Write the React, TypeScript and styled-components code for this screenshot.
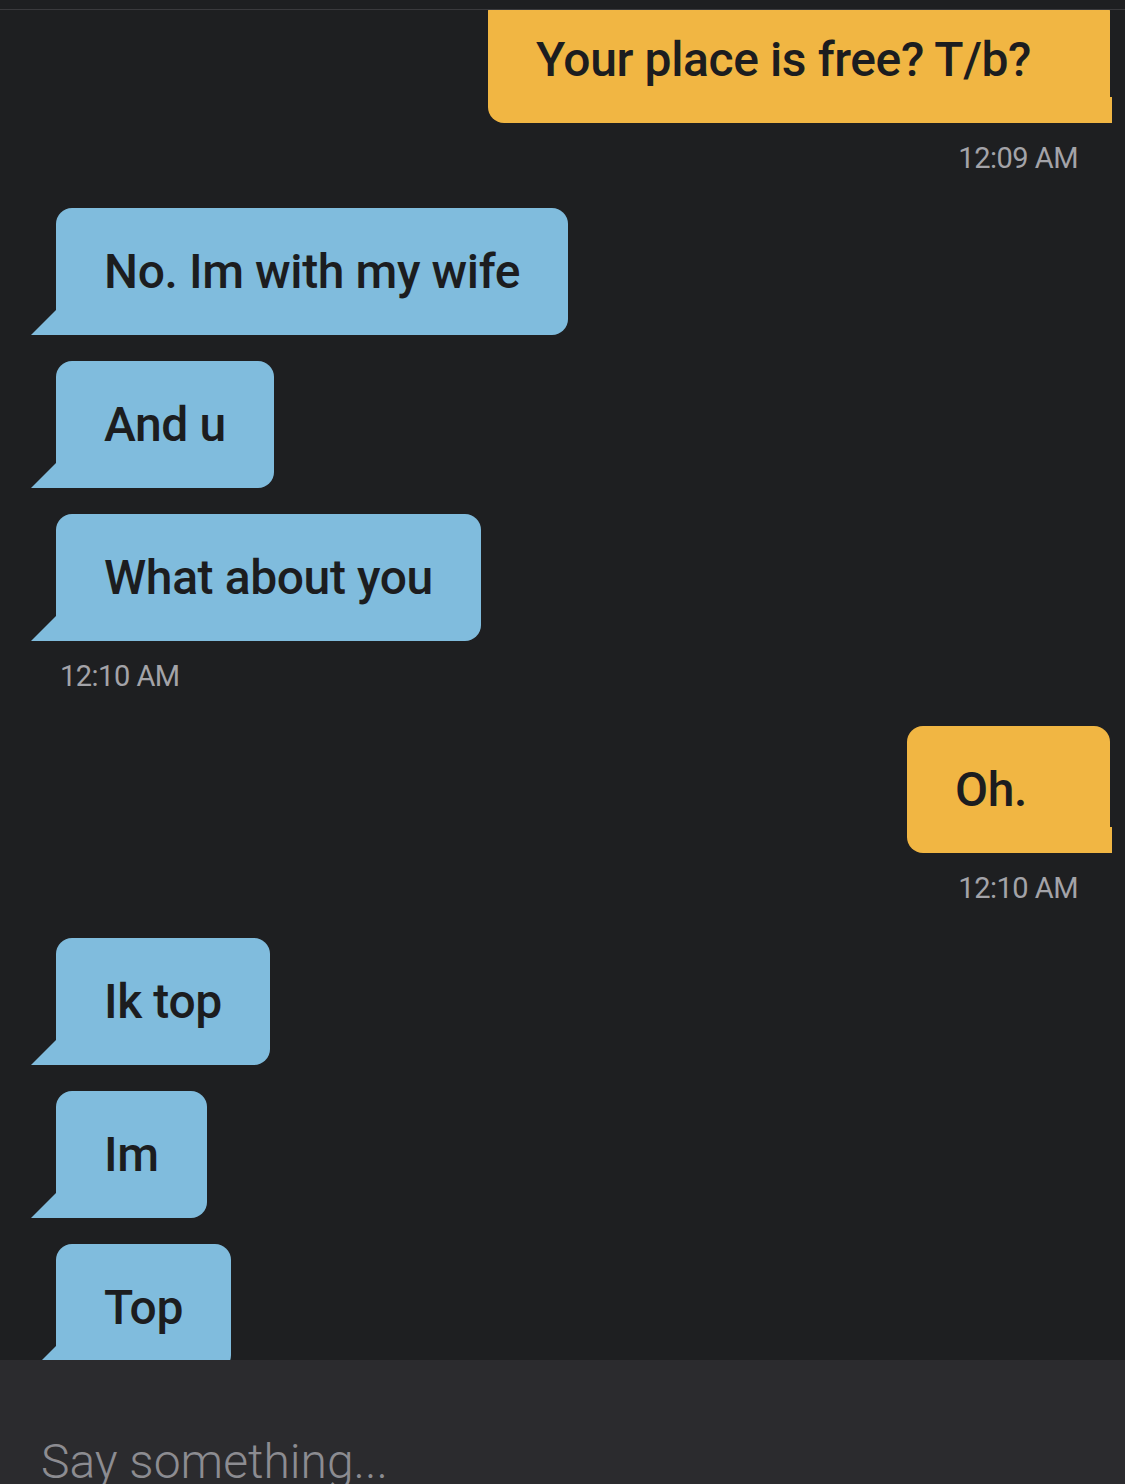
import React from "react";
import styled, { createGlobalStyle } from "styled-components";

const GlobalStyle = createGlobalStyle`
  html, body {
    margin: 0;
    padding: 0;
    background: #1e1f21;
    overflow: hidden;
  }
  * { box-sizing: border-box; }
`;

const Screen = styled.div`
  width: 1125px;
  height: 1484px;
  display: flex;
  flex-direction: column;
  background: #1e1f21;
  font-family: Roboto, "Liberation Sans", sans-serif;
  overflow: hidden;
`;

const TopStrip = styled.div`
  height: 10px;
  flex: none;
  border-bottom: 1px solid #3a3a3d;
  background: #1e1f21;
`;

const Thread = styled.div`
  flex: 1;
  display: flex;
  flex-direction: column;
  overflow: hidden;
  min-height: 0;
`;

const Row = styled.div<{ $mine: boolean; $gap: number }>`
  display: flex;
  justify-content: ${(p) => (p.$mine ? "flex-end" : "flex-start")};
  margin-top: ${(p) => p.$gap}px;
  flex: none;
`;

const Bubble = styled.div<{ $mine: boolean }>`
  position: relative;
  height: 127px;
  display: flex;
  align-items: center;
  font-size: 48px;
  font-weight: 500;
  line-height: 1;
  letter-spacing: -0.4px;
  color: #1c1d1f;
  white-space: nowrap;
  background: ${(p) => (p.$mine ? "#f1b643" : "#80bcdd")};
  margin: ${(p) => (p.$mine ? "0 15px 0 0" : "0 0 0 56px")};
  padding: ${(p) => (p.$mine ? "0 79px 0 48px" : "0 48px")};
  min-width: ${(p) => (p.$mine ? "203px" : "0")};
  border-radius: ${(p) => (p.$mine ? "16px 16px 0 16px" : "16px 16px 16px 0")};

  &::after {
    content: "";
    position: absolute;
    bottom: 0;
    ${(p) =>
      p.$mine
        ? `right: -2px; width: 2px; height: 26px; background: #f1b643;`
        : `left: -25px; width: 0; height: 0; border-style: solid; border-width: 0 0 25px 25px; border-color: transparent transparent #80bcdd transparent;`}
  }
`;

const Stamp = styled.div<{ $mine: boolean }>`
  flex: none;
  margin-top: 18px;
  font-size: 29px;
  letter-spacing: -0.5px;
  color: #a3a3a8;
  text-align: ${(p) => (p.$mine ? "right" : "left")};
  padding: ${(p) => (p.$mine ? "0 47px 0 0" : "0 0 0 60px")};
`;

const InputBar = styled.div`
  height: 124px;
  flex: none;
  background: #2b2b2e;
  padding: 78px 0 0 41px;
  overflow: hidden;
`;

const Placeholder = styled.div`
  font-size: 48px;
  font-weight: 300;
  line-height: 1;
  color: #8c8c91;
  white-space: nowrap;
`;

type Item =
  | { kind: "msg"; mine: boolean; text: string; gap: number }
  | { kind: "time"; mine: boolean; text: string };

const items: Item[] = [
  { kind: "msg", mine: true, text: "Your place is free? T/b?", gap: -14 },
  { kind: "time", mine: true, text: "12:09 AM" },
  { kind: "msg", mine: false, text: "No. Im with my wife", gap: 33 },
  { kind: "msg", mine: false, text: "And u", gap: 26 },
  { kind: "msg", mine: false, text: "What about you", gap: 26 },
  { kind: "time", mine: false, text: "12:10 AM" },
  { kind: "msg", mine: true, text: "Oh.", gap: 33 },
  { kind: "time", mine: true, text: "12:10 AM" },
  { kind: "msg", mine: false, text: "Ik top", gap: 33 },
  { kind: "msg", mine: false, text: "Im", gap: 26 },
  { kind: "msg", mine: false, text: "Top", gap: 26 },
];

export default function App() {
  return (
    <Screen>
      <GlobalStyle />
      <TopStrip />
      <Thread>
        {items.map((it, i) =>
          it.kind === "msg" ? (
            <Row key={i} $mine={it.mine} $gap={it.gap}>
              <Bubble $mine={it.mine}>{it.text}</Bubble>
            </Row>
          ) : (
            <Stamp key={i} $mine={it.mine}>
              {it.text}
            </Stamp>
          )
        )}
      </Thread>
      <InputBar>
        <Placeholder>Say something...</Placeholder>
      </InputBar>
    </Screen>
  );
}
